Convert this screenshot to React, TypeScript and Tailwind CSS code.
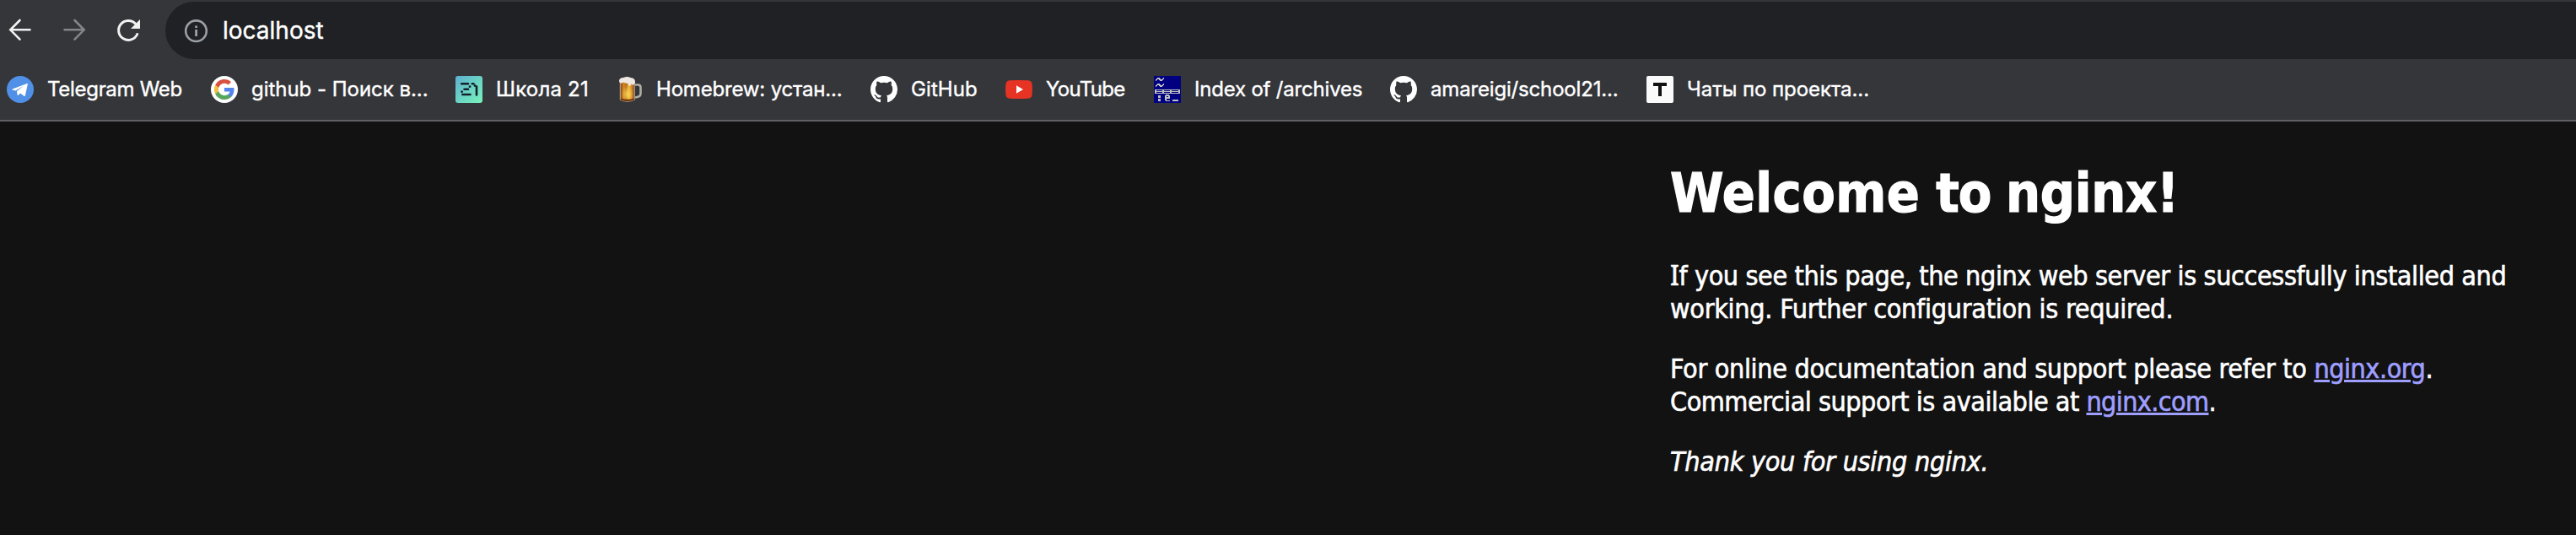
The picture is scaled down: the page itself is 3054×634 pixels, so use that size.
import React from "react";

type Bookmark = { text: string; width: string; label: string; icon: React.ReactNode };

const GITHUB_PATH =
  "M8 0C3.58 0 0 3.58 0 8c0 3.54 2.29 6.53 5.47 7.59.4.07.55-.17.55-.38 0-.19-.01-.82-.01-1.49-2.01.37-2.53-.49-2.69-.94-.09-.23-.48-.94-.82-1.13-.28-.15-.68-.52-.01-.53.63-.01 1.08.58 1.23.82.72 1.21 1.87.87 2.33.66.07-.52.28-.87.51-1.07-1.78-.2-3.64-.89-3.64-3.95 0-.87.31-1.59.82-2.15-.08-.2-.36-1.02.08-2.12 0 0 .67-.21 2.2.82.64-.18 1.32-.27 2-.27s1.36.09 2 .27c1.53-1.04 2.2-.82 2.2-.82.44 1.1.16 1.92.08 2.12.51.56.82 1.27.82 2.15 0 3.07-1.87 3.75-3.65 3.95.29.25.54.73.54 1.48 0 1.07-.01 1.93-.01 2.2 0 .21.15.46.55.38A8.01 8.01 0 0 0 16 8c0-4.42-3.58-8-8-8Z";

const Telegram = () => (
  <svg viewBox="0 0 32 32" className="size-8">
    <circle cx="16" cy="16" r="16" fill="#5090e6" />
    <path d="M6.8 15.6 24 9.1c.6-.2 1 .2.8.9l-2.9 13.2c-.2.8-.8 1-1.5.6l-4.3-3.2-2.3 2.2c-.6.5-1.1.3-1.2-.5l-.7-4 7.8-6.5-9.2 5.7-3.7-1c-.7-.2-.7-.6 0-.9Z" fill="#fff" />
  </svg>
);

const Google = () => (
  <svg viewBox="0 0 32 32" className="size-8">
    <circle cx="16" cy="16" r="16" fill="#fff" />
    <g transform="translate(4 4)">
      <path fill="#5383ec" d="M23.5 12.3c0-.8-.1-1.6-.2-2.3H12v4.5h6.5a5.5 5.5 0 0 1-2.4 3.6v3h3.9c2.2-2.1 3.5-5.2 3.5-8.8Z" />
      <path fill="#58a55c" d="M12 24c3.24 0 5.95-1.08 7.93-2.91l-3.86-3c-1.08.72-2.45 1.16-4.07 1.16-3.13 0-5.78-2.11-6.73-4.96H1.29v3.09C3.26 21.3 7.31 24 12 24Z" />
      <path fill="#f1bf42" d="M5.27 14.29a7.2 7.2 0 0 1 0-4.58V6.62H1.29a12 12 0 0 0 0 10.76l3.98-3.09Z" />
      <path fill="#d85140" d="M12 4.75c1.77 0 3.35.61 4.6 1.8l3.42-3.42C17.95 1.19 15.24 0 12 0 7.31 0 3.26 2.7 1.29 6.62l3.98 3.09C6.22 6.86 8.87 4.75 12 4.75Z" />
    </g>
  </svg>
);

const School = () => (
  <svg viewBox="0 0 32 32" className="size-8">
    <defs>
      <linearGradient id="mint" x1="0" y1="0" x2="1" y2="1">
        <stop offset="0" stopColor="#5fb0cf" />
        <stop offset="0.5" stopColor="#6ad3c4" />
        <stop offset="1" stopColor="#78f3bb" />
      </linearGradient>
    </defs>
    <rect width="32" height="32" rx="3" fill="url(#mint)" />
    <path d="M7.2 9.3H15M10.5 15.8H15M8.3 22H17.5M19.8 9.3H21.5" stroke="#14202c" strokeWidth="2.6" strokeLinecap="round" />
    <path d="M17 12.7h.01M7.6 18.7h.01M23 11.5h.01" stroke="#14202c" strokeWidth="2.8" strokeLinecap="round" />
    <path d="M25 12.5V22.5" stroke="#14202c" strokeWidth="2.6" strokeLinecap="round" />
  </svg>
);

const Beer = () => (
  <svg viewBox="0 0 32 32" className="size-8">
    <defs>
      <linearGradient id="ale" x1="0" y1="0" x2="1" y2="0">
        <stop offset="0" stopColor="#8a4c14" />
        <stop offset="0.25" stopColor="#d98a24" />
        <stop offset="0.4" stopColor="#b26a1a" />
        <stop offset="0.6" stopColor="#f2b545" />
        <stop offset="0.8" stopColor="#d88c28" />
        <stop offset="1" stopColor="#8a5220" />
      </linearGradient>
      <radialGradient id="glow" cx="0.5" cy="0.65" r="0.45">
        <stop offset="0" stopColor="#ffdf5c" stopOpacity="0.85" />
        <stop offset="1" stopColor="#ffdf5c" stopOpacity="0" />
      </radialGradient>
    </defs>
    <path d="M21 10.5h3.500q3 0 3 3v7q0 3.800-4 4.500l-2.500.6" fill="none" stroke="#b0ada3" strokeWidth="2.6" />
    <path d="M2.8 6.5h18v22q-9 4.500-18 0Z" fill="#b9aa92" />
    <path d="M3.8 7h16v21q-8 3-16 0Z" fill="url(#ale)" />
    <path d="M3.8 7h16v21q-8 3-16 0Z" fill="url(#glow)" />
    <path d="M3.8 26.5q8 2.500 16 0v2q-8 3-16 0Z" fill="#71350d" />
    <path d="M2 5.5Q2.5 2 7 2q4.5-2 8.5 0Q21 2.5 21 7q-.5 4-3 3.5-1 0-1.500-1.500-.5 3-2 3-1.500-.5-2-3.500Q9.5 9 7 7.5 4.500 9.500 3 8 1.800 7 2 5.500Z" fill="#eee8e2" />
  </svg>
);

const GitHub = () => (
  <svg viewBox="0 0 16 16" className="size-8" fill="#fff">
    <path d={GITHUB_PATH} />
  </svg>
);

const YouTube = () => (
  <svg viewBox="0 0 32 32" className="size-8">
    <path d="M5 5.3Q16 4.5 27 5.3q4 .3 4.500 4.200.8 6.500 0 13-.5 3.900-4.500 4.200-11 .8-22 0-4-.3-4.500-4.200-.8-6.500 0-13Q1 5.600 5 5.300Z" fill="#e63323" />
    <path d="M13 11.3v9.400l8-4.700Z" fill="#fff" />
  </svg>
);

const Terminal = () => (
  <svg viewBox="0 0 32 32" className="size-8" shapeRendering="crispEdges">
    <rect width="32" height="32" fill="#000080" />
    <g fill="#c0c0c0">
      <path d="M2 4h1V3h1V2h3v1h1v1h2V3h1V2h1v2h-1v1h-1v1H7V5H6V4H4v1H3v1H2Z" />
      <path d="M2 11h1v-1h1V9h3v1h1v1h2v-1h1V9h1v2h-1v1h-1v1H7v-1H6v-1H4v1H3v1H2Z" />
      <path d="M1 16h30v5H1ZM3 17v1h7v-1ZM12 17v1h7v-1ZM21 17v1h8v-1ZM3 19v1h7v-1ZM12 19v1h7v-1ZM21 19v1h8v-1Z" fillRule="evenodd" />
      <path d="M5 23h3v3H5ZM5 27h3v3H5ZM22 28h7v2h-7Z" />
      <path d="M14 22h4v1h1v4h-4v2h4v1h-5v-1h-1v-6h1ZM15 24v1h2v-1Z" fillRule="evenodd" />
    </g>
  </svg>
);

const LetterT = () => (
  <svg viewBox="0 0 32 32" className="size-8">
    <rect width="32" height="32" rx="2" fill="#fafafa" />
    <path d="M8 8h16v4h-6v12h-4V12H8Z" fill="#111" />
  </svg>
);

const bookmarks: Bookmark[] = [
  { text: "Telegram Web", width: "w-[242px]", label: "tracking-[-0.3px]", icon: <Telegram /> },
  { text: "github - Поиск в...", width: "w-[290px]", label: "tracking-[-0.03px]", icon: <Google /> },
  { text: "Школа 21", width: "w-[192px]", label: "tracking-[0.2px]", icon: <School /> },
  { text: "Homebrew: устан...", width: "w-[300px]", label: "-ml-[2px] tracking-[-0.18px]", icon: <Beer /> },
  { text: "GitHub", width: "w-[160px]", label: "tracking-[0.1px]", icon: <GitHub /> },
  { text: "YouTube", width: "w-[176px]", label: "tracking-[-0.7px]", icon: <YouTube /> },
  { text: "Index of /archives", width: "w-[280px]", label: "tracking-[-0.2px]", icon: <Terminal /> },
  { text: "amareigi/school21...", width: "w-[304px]", label: "tracking-[-0.17px]", icon: <GitHub /> },
  { text: "Чаты по проекта...", width: "w-[280px]", label: "tracking-[-0.06px]", icon: <LetterT /> },
];

function Toolbar() {
  return (
    <div className="flex h-[70px] pt-[2px]">
      <div className="flex w-[196px] shrink-0 items-center">
        <svg viewBox="0 0 196 68" className="h-[68px] w-[196px]" fill="none">
          <path d="M35.5 33.3H12.5M23.5 22 12.3 33.3 23.5 44.6" stroke="#f1f1f1" strokeWidth="2.6" strokeLinecap="round" />
          <path d="M76.5 33.3H99.5M88.5 22 99.7 33.3 88.5 44.6" stroke="#858588" strokeWidth="2.6" strokeLinecap="round" />
          <path d="M162.7 38.5A11.5 11.5 0 1 1 160.5 26" stroke="#f1f1f1" strokeWidth="3" strokeLinecap="round" />
          <path d="M166 21v11h-11Z" fill="#f1f1f1" />
        </svg>
      </div>
      <div className="flex h-[68px] flex-1 items-center rounded-l-full bg-[#202124] pl-[22px]">
        <svg viewBox="0 0 29 29" className="size-[29px]" fill="none">
          <circle cx="14.5" cy="14.7" r="12.3" stroke="#9aa0a6" strokeWidth="2.6" />
          <path d="M13.2 8.4h2.8v2.700h-2.800ZM13.200 13h2.800v8h-2.800Z" fill="#9aa0a6" />
        </svg>
        <span className="ml-[17px] text-[28px] leading-none text-white">localhost</span>
      </div>
    </div>
  );
}

function Link({ children }: { children: string }) {
  return (
    <a className="text-[#9e9eff] underline decoration-[3px] underline-offset-[2px]">{children}</a>
  );
}

export default function App() {
  return (
    <div className="flex h-[634px] w-[3054px] flex-col overflow-hidden bg-[#121212] text-white">
      <header className="h-[144px] shrink-0 border-b-2 border-[#5f6063] bg-[#35363a] font-['Inter',sans-serif] [-webkit-text-stroke:0.4px]">
        <Toolbar />
        <nav className="flex h-[72px] items-center pl-2">
          {bookmarks.map((b) => (
            <a key={b.text} className={`flex shrink-0 items-center gap-4 whitespace-nowrap ${b.width}`}>
              {b.icon}
              <span className={`text-[24px] leading-8 ${b.label}`}>{b.text}</span>
            </a>
          ))}
        </nav>
      </header>
      <main className="ml-[1980px] w-[1070px] pt-[46px] font-['DejaVu_Sans_Condensed','DejaVu_Sans',sans-serif] text-[32px] leading-[39px] whitespace-nowrap [-webkit-text-stroke:0.6px]">
        <h1 className="text-[64px] leading-[78px] font-bold [-webkit-text-stroke:1.2px] [word-spacing:-1.5px]">
          <span className="tracking-[0.5px]">Welcome </span>
          <span className="tracking-[-1px]">to </span>
          <span className="tracking-[-0.2px]">nginx!</span>
        </h1>
        <p className="mt-[40px]">
          <span className="tracking-[-0.38px]">
            <span className="font-['Noto_Sans'] leading-none">I</span>f you see this page, the nginx web server is successfully installed and
          </span>
          <br />
          <span className="tracking-[-0.26px]">working. Further configuration is required.</span>
        </p>
        <p className="mt-8">
          <span className="tracking-[-0.32px]">For online documentation and support please refer to </span>
          <span className="tracking-[-0.45px]">
            <Link>nginx.org</Link>.
          </span>
          <br />
          <span className="tracking-[-0.48px]">Commercial support is available at </span>
          <span className="tracking-[-0.6px]">
            <Link>nginx.com</Link>.
          </span>
        </p>
        <p className="mt-8">
          <em className="tracking-[-0.26px] italic">Thank you for using nginx.</em>
        </p>
      </main>
    </div>
  );
}
